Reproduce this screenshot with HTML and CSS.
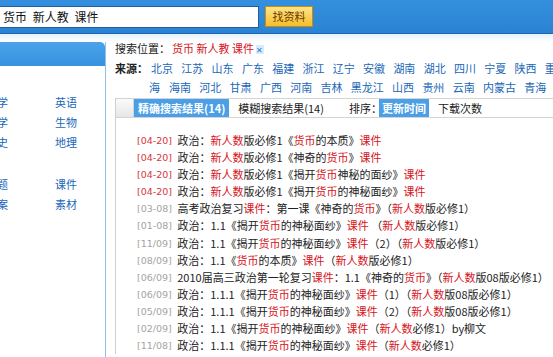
FILE: index.html
```html
<!DOCTYPE html>
<html lang="zh-CN">
<head>
  <meta charset="UTF-8">
  <title>找资料 - 搜索结果</title>
  <link rel="stylesheet" href="styles.css">
</head>
<body>
<div class="page">

  <!-- 顶部搜索条 -->
  <div class="topbar">
    <div class="search-input">货币 新人教 课件</div>
    <div class="search-btn">找资料</div>
  </div>
  <div class="topbar-shadow"></div>

  <div class="main">
    <!-- 左侧分类 -->
    <div class="side">
      <div class="side-head"></div>
      <div class="side-group">
        <a>数学</a><a>英语</a>
        <a>化学</a><a>生物</a>
        <a>历史</a><a>地理</a>
      </div>
      <div class="side-group">
        <a>试题</a><a>课件</a>
        <a>教案</a><a>素材</a>
      </div>
    </div>

    <!-- 右侧内容 -->
    <div class="content">
      <div class="where">搜索位置：<span class="kw">货币 新人教 课件</span><span class="del">✕</span></div>

      <div class="source">
        <b class="source-label">来源：</b>
        <div class="areas">
          <div class="area-row">
            <a>北京</a><a>江苏</a><a>山东</a><a>广东</a><a>福建</a><a>浙江</a><a>辽宁</a><a>安徽</a><a>湖南</a><a>湖北</a><a>四川</a><a>宁夏</a><a>陕西</a><a>重庆</a><a>上</a>
          </div>
          <div class="area-row second">
            <a>海</a><a>海南</a><a>河北</a><a>甘肃</a><a>广西</a><a>河南</a><a>吉林</a><a>黑龙江</a><a>山西</a><a>贵州</a><a>云南</a><a>内蒙古</a><a>青海</a>
          </div>
        </div>
      </div>

      <div class="result-box">
        <div class="tabs">
          <span class="tab-stub"></span>
          <span class="tab on">精确搜索结果(14)</span>
          <span class="tab">模糊搜索结果(14)</span>
          <span class="sort-label">排序：</span>
          <span class="tab on small">更新时间</span>
          <span class="tab small">下载次数</span>
        </div>

        <ul class="results">
          <li><span class="date new">[04-20]</span> 政治：<em>新人数</em>版必修1《<em>货币</em>的本质》<em>课件</em></li>
          <li><span class="date new">[04-20]</span> 政治：<em>新人数</em>版必修1《神奇的<em>货币</em>》<em>课件</em></li>
          <li><span class="date new">[04-20]</span> 政治：<em>新人数</em>版必修1《揭开<em>货币</em>神秘的面纱》<em>课件</em></li>
          <li><span class="date new">[04-20]</span> 政治：<em>新人数</em>版必修1《揭开<em>货币</em>的神秘面纱》<em>课件</em></li>
          <li><span class="date">[03-08]</span> 高考政治复习<em>课件</em>：第一课《神奇的<em>货币</em>》（<em>新人数</em>版必修1）</li>
          <li><span class="date">[01-08]</span> 政治：1.1《揭开<em>货币</em>的神秘面纱》<em>课件</em> （<em>新人数</em>版必修1）</li>
          <li><span class="date">[11/09]</span> 政治：1.1《揭开<em>货币</em>的神秘面纱》<em>课件</em>（2）（<em>新人数</em>版必修1）</li>
          <li><span class="date">[08/09]</span> 政治：1.1《<em>货币</em>的本质》<em>课件</em>（<em>新人数</em>版必修1）</li>
          <li><span class="date">[06/09]</span> 2010届高三政治第一轮复习<em>课件</em>：1.1《神奇的<em>货币</em>》（<em>新人数</em>版08版必修1）</li>
          <li><span class="date">[06/09]</span> 政治：1.1.1《揭开<em>货币</em>的神秘面纱》<em>课件</em>（1）（<em>新人数</em>版08版必修1）</li>
          <li><span class="date">[05/09]</span> 政治：1.1.1《揭开<em>货币</em>的神秘面纱》<em>课件</em>（2）（<em>新人数</em>版08版必修1）</li>
          <li><span class="date">[02/09]</span> 政治：1.1《揭开<em>货币</em>的神秘面纱》<em>课件</em>（<em>新人数</em>必修1）by柳文</li>
          <li><span class="date">[11/08]</span> 政治：1.1.1《揭开<em>货币</em>的神秘面纱》<em>课件</em>（<em>新人数</em>必修1）</li>
        </ul>
      </div>
    </div>
  </div>

</div>
</body>
</html>
```

FILE: styles.css
```css
html, body {
  margin: 0;
  overflow: hidden;
  background: #fff;
}

body {
  font-family: "Noto Sans CJK SC", sans-serif;
  font-size: 11px;
  color: #222;
}

.page {
  margin-left: -40px;
  width: 760px;
}

a {
  color: #2167b8;
  text-decoration: none;
}

/* 顶部搜索条 */
.topbar {
  height: 33px;
  background: linear-gradient(#3490de, #2a83d2);
  border-bottom: 1px solid #1a66b4;
  display: flex;
  align-items: center;
  padding-left: 30px;
}

.search-input {
  width: 255px;
  height: 20px;
  line-height: 20px;
  background: #fff;
  border: 1px solid #1f5fa0;
  padding-left: 12px;
  font-size: 12px;
  word-spacing: 3px;
  color: #111;
}

.search-btn {
  margin-left: 6px;
  width: 46px;
  height: 19px;
  line-height: 19px;
  text-align: center;
  background: linear-gradient(#ffe48a, #f7bd2a);
  border: 1px solid #c98a10;
  color: #6a3a00;
  font-size: 11px;
}

.topbar-shadow {
  height: 8px;
  background: linear-gradient(#e4f1fb, #fff);
}

.main {
  display: flex;
}

/* 左侧分类 */
.side {
  width: 145px;
  height: 320px;
  border-right: 1px solid #8fc1ea;
}

.side-head {
  height: 24px;
  background: linear-gradient(#4aa3ea, #3791de);
  border-top-right-radius: 5px;
}

.side-group {
  display: grid;
  grid-template-columns: 69px 69px;
  padding-left: 26px;
  line-height: 20px;
  margin-top: 26px;
}

.side-group + .side-group {
  margin-top: 22px;
}

/* 右侧内容 */
.content {
  flex: 1;
  padding-left: 9px;
}

.where {
  height: 14px;
  line-height: 14px;
  margin-top: -1px;
}

.kw {
  color: #d6141b;
  margin-left: 2px;
}

.del {
  display: inline-block;
  width: 8px;
  height: 9px;
  line-height: 9px;
  font-size: 8px;
  text-align: center;
  background: #d8ecfb;
  color: #2a7ccc;
  margin-left: 2px;
}

.source {
  display: flex;
  margin-top: 4px;
}

.source-label {
  width: 36px;
  line-height: 19px;
}

.area-row {
  height: 19px;
  line-height: 19px;
  white-space: nowrap;
}

.area-row a {
  margin-right: 8.3px;
}

.area-row.second {
  margin-left: -2px;
}

.area-row.second a:first-child {
  margin-right: 9px;
}

/* 结果列表 */
.result-box {
  margin-top: 1px;
  border-left: 1px solid #cfcfcf;
}

.tabs {
  height: 18px;
  border-top: 1px solid #d4d4d4;
  border-bottom: 1px solid #d4d4d4;
  display: flex;
  align-items: stretch;
  line-height: 18px;
}

.tab-stub {
  width: 17px;
  background: linear-gradient(#fbfbfb, #e6e6e6);
  border-right: 1px solid #d4d4d4;
}

.tab {
  padding: 0 4px;
}

.tab + .tab {
  padding: 0 9px;
}

.tab.on {
  background: #4a9fe6;
  color: #fff;
  font-weight: bold;
}

.tab.small {
  padding: 0 3px;
}

.tab.small + .tab.small {
  margin-left: 6px;
}

.sort-label {
  margin-left: 16px;
  margin-right: -3px;
}

.results {
  list-style: none;
  margin: 0;
  padding: 14px 0 0 21px;
}

.results li {
  height: 17.1px;
  line-height: 17.1px;
  white-space: nowrap;
}

.results em {
  font-style: normal;
  color: #d6141b;
}

.date {
  display: inline-block;
  vertical-align: top;
  font-family: "DejaVu Sans", sans-serif;
  font-size: 9.5px;
  color: #a3a3a3;
  margin-right: 3px;
}

.date.new {
  color: #d6363a;
}
```
